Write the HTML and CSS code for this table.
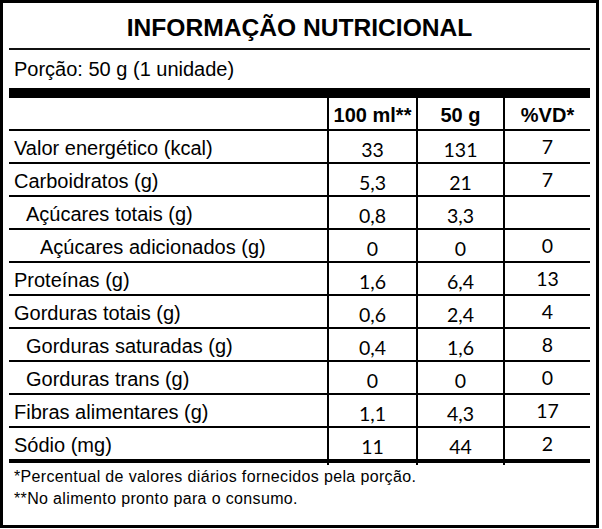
FILE: index.html
```html
<!DOCTYPE html>
<html lang="pt-BR">
<head>
<meta charset="utf-8">
<title>Informação Nutricional</title>
<link rel="stylesheet" href="styles.css">
</head>
<body>
<div class="label">
  <div class="title">INFORMAÇÃO NUTRICIONAL</div>
  <div class="portion">Porção: 50 g (1 unidade)</div>
  <div class="bar"></div>
  <div class="table">
    <div class="row head">
      <div class="name"></div>
      <div class="val">100 ml**</div>
      <div class="val">50 g</div>
      <div class="val vd">%VD*</div>
    </div>
    <div class="row">
      <div class="name">Valor energético (kcal)</div>
      <div class="val num">33</div>
      <div class="val num">131</div>
      <div class="val num vd">7</div>
    </div>
    <div class="row">
      <div class="name">Carboidratos (g)</div>
      <div class="val num">5,3</div>
      <div class="val num">21</div>
      <div class="val num vd">7</div>
    </div>
    <div class="row">
      <div class="name ind1">Açúcares totais (g)</div>
      <div class="val num">0,8</div>
      <div class="val num">3,3</div>
      <div class="val num vd"></div>
    </div>
    <div class="row">
      <div class="name ind2">Açúcares adicionados (g)</div>
      <div class="val num">0</div>
      <div class="val num">0</div>
      <div class="val num vd">0</div>
    </div>
    <div class="row">
      <div class="name">Proteínas (g)</div>
      <div class="val num">1,6</div>
      <div class="val num">6,4</div>
      <div class="val num vd">13</div>
    </div>
    <div class="row">
      <div class="name">Gorduras totais (g)</div>
      <div class="val num">0,6</div>
      <div class="val num">2,4</div>
      <div class="val num vd">4</div>
    </div>
    <div class="row">
      <div class="name ind1">Gorduras saturadas (g)</div>
      <div class="val num">0,4</div>
      <div class="val num">1,6</div>
      <div class="val num vd">8</div>
    </div>
    <div class="row">
      <div class="name ind1">Gorduras trans (g)</div>
      <div class="val num">0</div>
      <div class="val num">0</div>
      <div class="val num vd">0</div>
    </div>
    <div class="row">
      <div class="name">Fibras alimentares (g)</div>
      <div class="val num">1,1</div>
      <div class="val num">4,3</div>
      <div class="val num vd">17</div>
    </div>
    <div class="row last">
      <div class="name">Sódio (mg)</div>
      <div class="val num">11</div>
      <div class="val num">44</div>
      <div class="val num vd">2</div>
    </div>
  </div>
  <div class="notes">
    <p>*Percentual de valores diários fornecidos pela porção.</p>
    <p>**No alimento pronto para o consumo.</p>
  </div>
</div>
</body>
</html>
```

FILE: styles.css
```css
html, body {
  margin: 0;
  padding: 0;
  background: #fff;
}

.label {
  box-sizing: border-box;
  width: 599px;
  height: 528px;
  border: 3px solid #000;
  padding: 0 6px 0 6px;
  font-family: "Liberation Sans", Arial, sans-serif;
  color: #000;
}

.title {
  height: 45px;
  line-height: 50px;
  text-align: center;
  font-weight: bold;
  font-size: 24.6px;
  border-bottom: 2px solid #111;
}

.portion {
  height: 38px;
  line-height: 39px;
  font-size: 20px;
  padding-left: 5px;
}

.bar {
  height: 10px;
  background: #000;
}

.row {
  display: grid;
  grid-template-columns: 318px 89px 87px 1fr;
  height: 33px;
  box-sizing: border-box;
  border-bottom: 2px solid #000;
}

.row.last {
  height: 35px;
  border-bottom-width: 4px;
}

.name {
  font-size: 20px;
  line-height: 35px;
  padding-left: 5px;
  white-space: nowrap;
}

.name.ind1 {
  padding-left: 17px;
}

.name.ind2 {
  padding-left: 31px;
}

.val {
  border-left: 2px solid #000;
  text-align: center;
  line-height: 35px;
  font-size: 20px;
  font-weight: bold;
}

.val.num {
  font-family: Lato, "Liberation Sans", sans-serif;
  font-weight: normal;
  font-size: 19.5px;
  line-height: 37px;
}

.val.num.vd {
  line-height: 32px;
}

.notes {
  padding: 3px 0 0 5px;
  font-size: 16px;
  letter-spacing: 0.35px;
}

.notes p {
  margin: 0;
  line-height: 22px;
}
```
